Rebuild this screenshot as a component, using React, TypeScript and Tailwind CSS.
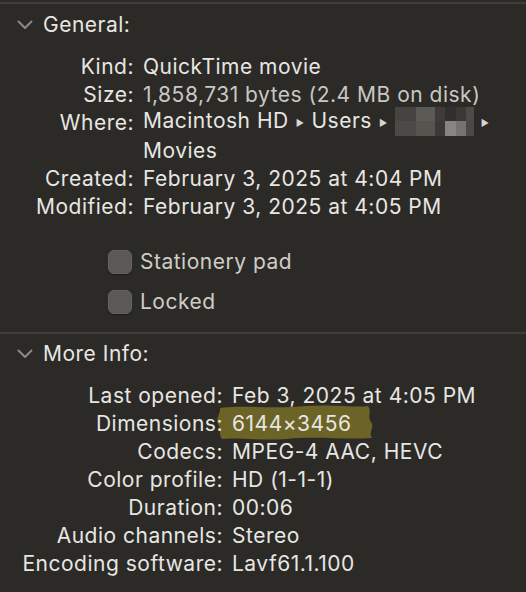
import React from 'react';

const font = { fontFamily: 'Inter, "Noto Sans", sans-serif' };

function Chevron() {
    return (
        <svg width="16" height="10" viewBox="0 0 16 10" className="shrink-0">
            <path d="M1.5 1.5 L8 8 L14.5 1.5" fill="none" stroke="#8b8a86" strokeWidth="2" strokeLinecap="round" strokeLinejoin="round" />
        </svg>
    );
}

function Header({ title }: { title: string }) {
    return (
        <div className="flex items-center h-[28px] pl-[17px] gap-[10px]">
            <Chevron />
            <span className="text-[21px] tracking-[0.5px] text-[#e8e6e3]">{title}</span>
        </div>
    );
}

function Arrow() {
    return <span className="text-[9px] text-[#d6d4d0] mx-[7px] relative top-[-2px]">▶</span>;
}

// pixelated username
function Blur() {
    const w = [21, 19, 10, 11, 10, 8];
    const top = ['#454440', '#5b5a56', '#3d3c39', '#302f2c', '#3a3936', '#4c4b47'];
    const bot = ['#4b4a46', '#55544f', '#3a3935', '#868581', '#747370', '#4a4945'];
    return (
        <span className="inline-flex flex-col align-middle relative top-[-1px]">
            <span className="flex">
                {w.map((x, i) => (
                    <span key={i} className="h-[14px]" style={{ width: x, background: top[i] }} />
                ))}
            </span>
            <span className="flex">
                {w.map((x, i) => (
                    <span key={i} className="h-[15px]" style={{ width: x, background: bot[i] }} />
                ))}
            </span>
        </span>
    );
}

function Row({ label, children, labelW, dim }: { label: string; children: React.ReactNode; labelW: string; dim?: boolean }) {
    return (
        <div className="flex h-[28px] items-center whitespace-nowrap">
            <span className={`${labelW} shrink-0 text-right text-[#e8e6e3]`}>{label}</span>
            <span className={`pl-[9px] ${dim ? 'text-[#c9c7c3]' : 'text-[#e8e6e3]'}`}>{children}</span>
        </div>
    );
}

function Checkbox({ label }: { label: string }) {
    return (
        <div className="flex items-center h-[24px] pl-[108px] gap-[8px]">
            <span className="w-[24px] h-[24px] rounded-[6px] bg-[#5a5955] border border-[#646360] shadow-[0_1px_1px_rgba(0,0,0,0.35)]" />
            <span className="text-[21px] tracking-[0.5px] text-[#cfcdc9]">{label}</span>
        </div>
    );
}

export default function App() {
    return (
        <div className="w-[526px] h-[592px] bg-[#2b2a26] overflow-hidden antialiased" style={font}>
            <div className="h-[2px]" />
            <div className="h-[2px] bg-[#3e3d39]" />

            <div className="pt-[7px]">
                <Header title="General:" />
            </div>

            <div className="mt-[14px] text-[21px] tracking-[0.5px] leading-[28px]">
                <Row label="Kind:" labelW="w-[134px]">QuickTime movie</Row>
                <Row label="Size:" labelW="w-[134px]" dim>1,858,731 bytes (2.4 MB on disk)</Row>
                <Row label="Where:" labelW="w-[134px]">
                    Macintosh HD<Arrow />Users<Arrow /><Blur /><Arrow />
                </Row>
                <Row label="" labelW="w-[134px]">Movies</Row>
                <Row label="Created:" labelW="w-[134px]">February 3, 2025 at 4:04 PM</Row>
                <Row label="Modified:" labelW="w-[134px]">February 3, 2025 at 4:05 PM</Row>
            </div>

            <div className="mt-[29px] flex flex-col gap-[16px]">
                <Checkbox label="Stationery pad" />
                <Checkbox label="Locked" />
            </div>

            <div className="mt-[18px] h-[2px] bg-[#3e3d39]" />

            <div className="pt-[6px]">
                <Header title="More Info:" />
            </div>

            <div className="mt-[14px] text-[21px] tracking-[0.5px] leading-[28px]">
                <Row label="Last opened:" labelW="w-[223px]">Feb 3, 2025 at 4:05 PM</Row>
                <div className="relative">
                    <svg className="absolute left-[216px] top-[-6px]" width="160" height="37" viewBox="0 0 160 37">
                        <path
                            d="M4 4 C30 1 60 5 90 2 C115 0 140 4 152 2 C156 8 151 12 155 18 C159 24 152 28 156 34 C130 36 100 32 70 35 C45 37 20 33 6 35 C2 30 6 26 2 20 C-1 14 5 9 4 4 Z"
                            fill="#6b6426"
                        />
                    </svg>
                    <div className="relative">
                        <Row label="Dimensions:" labelW="w-[223px]">6144×3456</Row>
                    </div>
                </div>
                <Row label="Codecs:" labelW="w-[223px]">MPEG-4 AAC, HEVC</Row>
                <Row label="Color profile:" labelW="w-[223px]">HD (1-1-1)</Row>
                <Row label="Duration:" labelW="w-[223px]">00:06</Row>
                <Row label="Audio channels:" labelW="w-[223px]">Stereo</Row>
                <Row label="Encoding software:" labelW="w-[223px]">Lavf61.1.100</Row>
            </div>
        </div>
    );
}
